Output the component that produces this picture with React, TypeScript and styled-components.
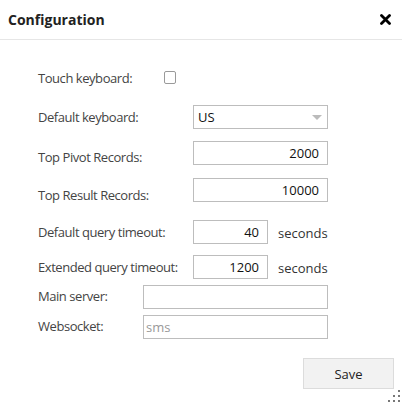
import React from "react";
import styled, { createGlobalStyle } from "styled-components";

const Global = createGlobalStyle`
  html, body { margin: 0; padding: 0; background: #fff; }
  body { font-family: "Open Sans", "Liberation Sans", sans-serif; }
  * { box-sizing: border-box; }
`;

const Dialog = styled.div`
  position: relative;
  width: 402px;
  height: 404px;
  background: #fff;
  overflow: hidden;
`;

const Header = styled.div`
  height: 40px;
  padding: 0 11px 0 8px;
  display: flex;
  align-items: center;
  justify-content: space-between;
  border-bottom: 1px solid #e6e6e6;
`;

const Title = styled.h1`
  margin: 0;
  font-size: 14px;
  font-weight: 700;
  color: #222;
  line-height: 19px;
`;

const CloseButton = styled.button`
  width: 12px;
  height: 12px;
  padding: 0;
  border: 0;
  background: none;
  display: flex;
  align-items: center;
  justify-content: center;
  cursor: pointer;
`;

const Body = styled.div`
  padding-left: 38px;
  display: flex;
  flex-direction: column;
`;

const Row = styled.div<{ $gap: number }>`
  display: flex;
  align-items: flex-start;
  height: 24px;
  margin-top: ${(p) => p.$gap}px;
`;

const Label = styled.label<{ $width: number; $drop: number }>`
  width: ${(p) => p.$width}px;
  flex: none;
  padding-top: ${(p) => p.$drop}px;
  font-size: 13px;
  line-height: 18px;
  letter-spacing: -0.45px;
  color: #444;
`;

const Check = styled.input`
  appearance: none;
  margin: 2px 0 0 0;
  width: 12px;
  height: 13px;
  border: 1px solid #9a9a9a;
  border-radius: 2px;
  background: #fff;
`;

const Field = styled.input<{ $width: number; $align?: "left" | "right" }>`
  width: ${(p) => p.$width}px;
  height: 24px;
  border: 1px solid #bdbdbd;
  border-radius: 0;
  padding: 0 ${(p) => (p.$align === "right" ? 8 : 1)}px 0 ${(p) => (p.$align === "right" ? 4 : 2)}px;
  font-family: inherit;
  font-size: 13px;
  color: #111;
  text-align: ${(p) => p.$align ?? "left"};
  outline: none;
  background: #fff;
  &::placeholder { color: #999; }
`;

const SelectBox = styled.div`
  width: 135px;
  height: 24px;
  border: 1px solid #bdbdbd;
  padding: 0 5px 0 4px;
  display: flex;
  align-items: center;
  justify-content: space-between;
  font-size: 13px;
  color: #111;
`;

const Unit = styled.span`
  margin-left: 10px;
  font-size: 13px;
  line-height: 18px;
  padding-top: 4px;
  color: #333;
`;

const Footer = styled.div`
  display: flex;
  justify-content: flex-end;
  padding: 19px 8px 0 0;
`;

const SaveButton = styled.button`
  width: 91px;
  height: 31px;
  border: 1px solid #dcdcdc;
  background: #f2f2f2;
  font-family: inherit;
  font-size: 13px;
  color: #222;
  cursor: pointer;
`;

const Grip = styled.svg`
  position: absolute;
  right: 0;
  bottom: 0;
`;

export default function App() {
  return (
    <>
      <Global />
      <Dialog>
        <Header>
          <Title>Configuration</Title>
          <CloseButton aria-label="Close">
            <svg width="11" height="11" viewBox="0 0 11 11">
              <path d="M1.5 1.5 L9.5 9.5 M9.5 1.5 L1.5 9.5" stroke="#000" strokeWidth="2.8" strokeLinecap="round" />
            </svg>
          </CloseButton>
        </Header>
        <Body>
          <Row $gap={29}>
            <Label $width={126} $drop={0}>Touch keyboard:</Label>
            <Check type="checkbox" />
          </Row>
          <Row $gap={12}>
            <Label $width={155} $drop={3}>Default keyboard:</Label>
            <SelectBox>
              <span>US</span>
              <svg width="10" height="5" viewBox="0 0 10 5">
                <path d="M0 0 H10 L5 5 Z" fill="#bbb" />
              </svg>
            </SelectBox>
          </Row>
          <Row $gap={12}>
            <Label $width={155} $drop={7}>Top Pivot Records:</Label>
            <Field $width={135} $align="right" defaultValue="2000" />
          </Row>
          <Row $gap={13}>
            <Label $width={155} $drop={8}>Top Result Records:</Label>
            <Field $width={135} $align="right" defaultValue="10000" />
          </Row>
          <Row $gap={18}>
            <Label $width={155} $drop={3}>Default query timeout:</Label>
            <Field $width={75} $align="right" defaultValue="40" />
            <Unit>seconds</Unit>
          </Row>
          <Row $gap={11}>
            <Label $width={155} $drop={3}>Extended query timeout:</Label>
            <Field $width={75} $align="right" defaultValue="1200" />
            <Unit>seconds</Unit>
          </Row>
          <Row $gap={6}>
            <Label $width={105} $drop={2}>Main server:</Label>
            <Field $width={185} />
          </Row>
          <Row $gap={6}>
            <Label $width={105} $drop={2}>Websocket:</Label>
            <Field $width={185} placeholder="sms" />
          </Row>
        </Body>
        <Footer>
          <SaveButton>Save</SaveButton>
        </Footer>
        <Grip width="16" height="16" viewBox="0 0 16 16">
          <g fill="#777">
            <rect x="12" y="2" width="2" height="2" />
            <rect x="12" y="7" width="2" height="2" />
            <rect x="7" y="7" width="2" height="2" />
            <rect x="12" y="12" width="2" height="2" />
            <rect x="7" y="12" width="2" height="2" />
            <rect x="2" y="12" width="2" height="2" />
          </g>
        </Grip>
      </Dialog>
    </>
  );
}
